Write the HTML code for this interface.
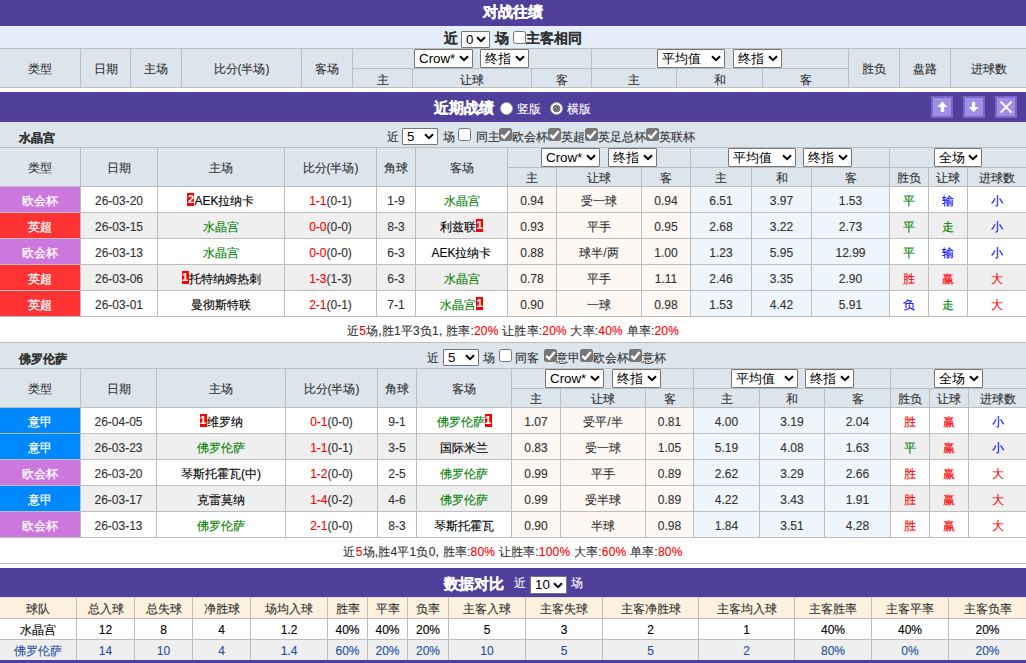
<!DOCTYPE html>
<html><head><meta charset="utf-8"><style>
html,body{margin:0;padding:0;width:1026px;height:663px;overflow:hidden;background:#fff}
body{position:relative;font-family:"Liberation Sans",sans-serif;font-size:12px;color:#333}
body>div,body>svg{position:absolute;box-sizing:content-box}
.t{text-align:center;white-space:nowrap;overflow:visible;-webkit-text-stroke:0.12px currentColor}
.lt{-webkit-text-stroke:0.12px currentColor}
.lt{white-space:nowrap}
.sel{background:#fff;border:1px solid #767676;border-radius:1px;color:#000;box-sizing:border-box!important}
.sel span{white-space:nowrap}
.bd{display:inline-block;background:#f00;color:#fff;font-weight:bold;font-size:11px;line-height:13px;height:13px;width:7px;text-align:center;vertical-align:top;margin-top:4px}
</style></head><body>
<div style="left:0px;top:0px;width:1026px;height:26px;background:#51409b;"></div>
<div class="t" style="left:0px;top:-1px;width:1026px;height:25px;line-height:25px;font-size:15px;color:#fff;font-weight:bold;-webkit-text-stroke:0.3px #fff">对战往绩</div>
<div style="left:0px;top:26px;width:1026px;height:22px;background:#e4eef8;"></div>
<div class="lt" style="left:444px;top:27px;height:23px;line-height:23px;font-size:14px;color:#333;font-weight:bold;">近</div>
<div class="sel" style="left:461px;top:31px;width:29px;height:17px;line-height:15px;font-size:13.33px"><span style="position:absolute;left:4px;top:0">0</span><svg width="10" height="7" viewBox="0 0 10 7" style="position:absolute;right:3px;top:4px"><path d="M1 1.2 L5 5.2 L9 1.2" fill="none" stroke="#000" stroke-width="2"/></svg></div>
<div class="lt" style="left:495px;top:27px;height:23px;line-height:23px;font-size:14px;color:#333;font-weight:bold;">场</div>
<div style="left:513px;top:31px;width:11px;height:11px;border:1px solid #767676;border-radius:2.5px;background:#fff"></div>
<div class="lt" style="left:526px;top:27px;height:23px;line-height:23px;font-size:14px;color:#333;font-weight:bold;">主客相同</div>
<div style="left:0px;top:48px;width:1026px;height:40px;background:#dce4ec;"></div>
<div style="left:0px;top:48px;width:1026px;height:1px;background:#bdbdbd;"></div>
<div style="left:352px;top:68px;width:496px;height:1px;background:#bdbdbd;"></div>
<div style="left:0px;top:87px;width:1026px;height:1px;background:#bdbdbd;"></div>
<div style="left:80px;top:48px;width:1px;height:40px;background:#bdbdbd;"></div>
<div style="left:130px;top:48px;width:1px;height:40px;background:#bdbdbd;"></div>
<div style="left:181px;top:48px;width:1px;height:40px;background:#bdbdbd;"></div>
<div style="left:301px;top:48px;width:1px;height:40px;background:#bdbdbd;"></div>
<div style="left:352px;top:48px;width:1px;height:40px;background:#bdbdbd;"></div>
<div style="left:591px;top:48px;width:1px;height:40px;background:#bdbdbd;"></div>
<div style="left:848px;top:48px;width:1px;height:40px;background:#bdbdbd;"></div>
<div style="left:899px;top:48px;width:1px;height:40px;background:#bdbdbd;"></div>
<div style="left:950px;top:48px;width:1px;height:40px;background:#bdbdbd;"></div>
<div style="left:412px;top:68px;width:1px;height:20px;background:#bdbdbd;"></div>
<div style="left:531px;top:68px;width:1px;height:20px;background:#bdbdbd;"></div>
<div style="left:676px;top:68px;width:1px;height:20px;background:#bdbdbd;"></div>
<div style="left:762px;top:68px;width:1px;height:20px;background:#bdbdbd;"></div>
<div class="t" style="left:-1px;top:50px;width:81px;height:38px;line-height:38px;font-size:12px;color:#333;font-weight:normal;">类型</div>
<div class="t" style="left:81px;top:50px;width:49px;height:38px;line-height:38px;font-size:12px;color:#333;font-weight:normal;">日期</div>
<div class="t" style="left:131px;top:50px;width:50px;height:38px;line-height:38px;font-size:12px;color:#333;font-weight:normal;">主场</div>
<div class="t" style="left:182px;top:50px;width:119px;height:38px;line-height:38px;font-size:12px;color:#333;font-weight:normal;">比分(半场)</div>
<div class="t" style="left:302px;top:50px;width:50px;height:38px;line-height:38px;font-size:12px;color:#333;font-weight:normal;">客场</div>
<div class="t" style="left:849px;top:50px;width:50px;height:38px;line-height:38px;font-size:12px;color:#333;font-weight:normal;">胜负</div>
<div class="t" style="left:900px;top:50px;width:50px;height:38px;line-height:38px;font-size:12px;color:#333;font-weight:normal;">盘路</div>
<div class="t" style="left:951px;top:50px;width:75px;height:38px;line-height:38px;font-size:12px;color:#333;font-weight:normal;">进球数</div>
<div class="t" style="left:353px;top:71px;width:59px;height:18px;line-height:18px;font-size:12px;color:#333;font-weight:normal;">主</div>
<div class="t" style="left:413px;top:71px;width:118px;height:18px;line-height:18px;font-size:12px;color:#333;font-weight:normal;">让球</div>
<div class="t" style="left:532px;top:71px;width:59px;height:18px;line-height:18px;font-size:12px;color:#333;font-weight:normal;">客</div>
<div class="t" style="left:592px;top:71px;width:84px;height:18px;line-height:18px;font-size:12px;color:#333;font-weight:normal;">主</div>
<div class="t" style="left:677px;top:71px;width:85px;height:18px;line-height:18px;font-size:12px;color:#333;font-weight:normal;">和</div>
<div class="t" style="left:763px;top:71px;width:85px;height:18px;line-height:18px;font-size:12px;color:#333;font-weight:normal;">客</div>
<div class="sel" style="left:414px;top:49px;width:59px;height:19px;line-height:17px;font-size:13.33px"><span style="position:absolute;left:4px;top:0">Crow*</span><svg width="10" height="7" viewBox="0 0 10 7" style="position:absolute;right:3px;top:5px"><path d="M1 1.2 L5 5.2 L9 1.2" fill="none" stroke="#000" stroke-width="2"/></svg></div>
<div class="sel" style="left:480px;top:49px;width:49px;height:19px;line-height:17px;font-size:13.33px"><span style="position:absolute;left:4px;top:0">终指</span><svg width="10" height="7" viewBox="0 0 10 7" style="position:absolute;right:3px;top:5px"><path d="M1 1.2 L5 5.2 L9 1.2" fill="none" stroke="#000" stroke-width="2"/></svg></div>
<div class="sel" style="left:657px;top:49px;width:68px;height:19px;line-height:17px;font-size:13.33px"><span style="position:absolute;left:4px;top:0">平均值</span><svg width="10" height="7" viewBox="0 0 10 7" style="position:absolute;right:3px;top:5px"><path d="M1 1.2 L5 5.2 L9 1.2" fill="none" stroke="#000" stroke-width="2"/></svg></div>
<div class="sel" style="left:733px;top:49px;width:49px;height:19px;line-height:17px;font-size:13.33px"><span style="position:absolute;left:4px;top:0">终指</span><svg width="10" height="7" viewBox="0 0 10 7" style="position:absolute;right:3px;top:5px"><path d="M1 1.2 L5 5.2 L9 1.2" fill="none" stroke="#000" stroke-width="2"/></svg></div>
<div style="left:0px;top:88px;width:1026px;height:4px;background:#fff;"></div>
<div style="left:0px;top:92px;width:1026px;height:30px;background:#51409b;"></div>
<div class="lt" style="left:434px;top:93px;height:30px;line-height:30px;font-size:15px;color:#fff;font-weight:bold;-webkit-text-stroke:0.3px #fff">近期战绩</div>
<div style="left:500px;top:102px;width:11px;height:11px;border-radius:50%;background:#fff;border:1px solid #aaa;box-sizing:content-box"></div>
<div class="lt" style="left:517px;top:94px;height:30px;line-height:30px;font-size:12px;color:#fff;font-weight:normal;">竖版</div>
<div style="left:550px;top:102px;width:11px;height:11px;border-radius:50%;background:radial-gradient(circle at 50% 50%, #777 0, #777 3.6px, #fff 4.2px);border:1px solid #aaa"></div>
<div class="lt" style="left:567px;top:94px;height:30px;line-height:30px;font-size:12px;color:#fff;font-weight:normal;">横版</div>
<div style="left:931px;top:96px;width:18px;height:18px;border:2px solid #7a68c8;background:#a08de6"></div>
<svg style="position:absolute;left:931px;top:96px" width="22" height="22" viewBox="0 0 22 22"><path d="M11.4 5.6 L16.4 11 L13.2 11 L13.2 16 L9.8 16 L9.8 11 L6.4 11 Z" fill="#fff"/></svg>
<div style="left:963px;top:96px;width:18px;height:18px;border:2px solid #7a68c8;background:#a08de6"></div>
<svg style="position:absolute;left:963px;top:96px" width="22" height="22" viewBox="0 0 22 22"><path d="M10.6 16.2 L15.7 11 L12.2 11 L12.2 6 L8.9 6 L8.9 11 L5.6 11 Z" fill="#fff"/></svg>
<div style="left:995px;top:96px;width:18px;height:18px;border:2px solid #7a68c8;background:#a08de6"></div>
<svg style="position:absolute;left:995px;top:96px" width="22" height="22" viewBox="0 0 22 22"><path d="M5.6 5.6 L16.6 16.6 M16.6 5.6 L5.6 16.6" stroke="#fff" stroke-width="2"/></svg>
<div style="left:0px;top:122px;width:1026px;height:25px;background:#dce4ec;"></div>
<div class="lt" style="left:19px;top:126px;height:25px;line-height:25px;font-size:12px;color:#333;font-weight:bold;">水晶宫</div>
<div class="lt" style="left:387px;top:125px;height:25px;line-height:25px;font-size:12px;color:#333;font-weight:normal;">近</div>
<div class="sel" style="left:402px;top:128px;width:36px;height:17px;line-height:15px;font-size:13.33px"><span style="position:absolute;left:4px;top:0">5</span><svg width="10" height="7" viewBox="0 0 10 7" style="position:absolute;right:3px;top:4px"><path d="M1 1.2 L5 5.2 L9 1.2" fill="none" stroke="#000" stroke-width="2"/></svg></div>
<div class="lt" style="left:443px;top:125px;height:25px;line-height:25px;font-size:12px;color:#333;font-weight:normal;">场</div>
<div style="left:458px;top:128px;width:11px;height:11px;border:1px solid #767676;border-radius:2.5px;background:#fff"></div>
<div class="lt" style="left:476px;top:125px;height:25px;line-height:25px;font-size:12px;color:#333;font-weight:normal;">同主</div>
<div style="left:499px;top:128px;width:13px;height:13px"><svg width="13" height="13" viewBox="0 0 13 13" style="position:absolute;left:0;top:0"><rect x="0" y="0" width="13" height="13" rx="2.5" fill="#767676"/><path d="M2.3 6.9 L5.1 9.8 L10.7 3.0" fill="none" stroke="#fff" stroke-width="2.4"/></svg></div>
<div class="lt" style="left:512px;top:125px;height:25px;line-height:25px;font-size:12px;color:#333;font-weight:normal;">欧会杯</div>
<div style="left:548px;top:128px;width:13px;height:13px"><svg width="13" height="13" viewBox="0 0 13 13" style="position:absolute;left:0;top:0"><rect x="0" y="0" width="13" height="13" rx="2.5" fill="#767676"/><path d="M2.3 6.9 L5.1 9.8 L10.7 3.0" fill="none" stroke="#fff" stroke-width="2.4"/></svg></div>
<div class="lt" style="left:561px;top:125px;height:25px;line-height:25px;font-size:12px;color:#333;font-weight:normal;">英超</div>
<div style="left:585px;top:128px;width:13px;height:13px"><svg width="13" height="13" viewBox="0 0 13 13" style="position:absolute;left:0;top:0"><rect x="0" y="0" width="13" height="13" rx="2.5" fill="#767676"/><path d="M2.3 6.9 L5.1 9.8 L10.7 3.0" fill="none" stroke="#fff" stroke-width="2.4"/></svg></div>
<div class="lt" style="left:598px;top:125px;height:25px;line-height:25px;font-size:12px;color:#333;font-weight:normal;">英足总杯</div>
<div style="left:646px;top:128px;width:13px;height:13px"><svg width="13" height="13" viewBox="0 0 13 13" style="position:absolute;left:0;top:0"><rect x="0" y="0" width="13" height="13" rx="2.5" fill="#767676"/><path d="M2.3 6.9 L5.1 9.8 L10.7 3.0" fill="none" stroke="#fff" stroke-width="2.4"/></svg></div>
<div class="lt" style="left:659px;top:125px;height:25px;line-height:25px;font-size:12px;color:#333;font-weight:normal;">英联杯</div>
<div style="left:0px;top:147px;width:1026px;height:40px;background:#dce4ec;"></div>
<div style="left:0px;top:147px;width:1026px;height:1px;background:#bdbdbd;"></div>
<div style="left:507px;top:167px;width:519px;height:1px;background:#bdbdbd;"></div>
<div style="left:0px;top:186px;width:1026px;height:1px;background:#bdbdbd;"></div>
<div style="left:80px;top:147px;width:1px;height:169px;background:#bdbdbd;"></div>
<div style="left:157px;top:147px;width:1px;height:169px;background:#bdbdbd;"></div>
<div style="left:284px;top:147px;width:1px;height:169px;background:#bdbdbd;"></div>
<div style="left:376px;top:147px;width:1px;height:169px;background:#bdbdbd;"></div>
<div style="left:415px;top:147px;width:1px;height:169px;background:#bdbdbd;"></div>
<div style="left:507px;top:147px;width:1px;height:169px;background:#bdbdbd;"></div>
<div style="left:690px;top:147px;width:1px;height:169px;background:#bdbdbd;"></div>
<div style="left:889px;top:147px;width:1px;height:169px;background:#bdbdbd;"></div>
<div style="left:556px;top:167px;width:1px;height:149px;background:#bdbdbd;"></div>
<div style="left:641px;top:167px;width:1px;height:149px;background:#bdbdbd;"></div>
<div style="left:751px;top:167px;width:1px;height:149px;background:#bdbdbd;"></div>
<div style="left:811px;top:167px;width:1px;height:149px;background:#bdbdbd;"></div>
<div style="left:928px;top:167px;width:1px;height:149px;background:#bdbdbd;"></div>
<div style="left:967px;top:167px;width:1px;height:149px;background:#bdbdbd;"></div>
<div class="t" style="left:-1px;top:149px;width:81px;height:38px;line-height:38px;font-size:12px;color:#333;font-weight:normal;">类型</div>
<div class="t" style="left:81px;top:149px;width:76px;height:38px;line-height:38px;font-size:12px;color:#333;font-weight:normal;">日期</div>
<div class="t" style="left:158px;top:149px;width:126px;height:38px;line-height:38px;font-size:12px;color:#333;font-weight:normal;">主场</div>
<div class="t" style="left:285px;top:149px;width:91px;height:38px;line-height:38px;font-size:12px;color:#333;font-weight:normal;">比分(半场)</div>
<div class="t" style="left:377px;top:149px;width:38px;height:38px;line-height:38px;font-size:12px;color:#333;font-weight:normal;">角球</div>
<div class="t" style="left:416px;top:149px;width:91px;height:38px;line-height:38px;font-size:12px;color:#333;font-weight:normal;">客场</div>
<div class="t" style="left:508px;top:169px;width:48px;height:18px;line-height:18px;font-size:12px;color:#333;font-weight:normal;">主</div>
<div class="t" style="left:557px;top:169px;width:84px;height:18px;line-height:18px;font-size:12px;color:#333;font-weight:normal;">让球</div>
<div class="t" style="left:642px;top:169px;width:48px;height:18px;line-height:18px;font-size:12px;color:#333;font-weight:normal;">客</div>
<div class="t" style="left:691px;top:169px;width:60px;height:18px;line-height:18px;font-size:12px;color:#333;font-weight:normal;">主</div>
<div class="t" style="left:752px;top:169px;width:59px;height:18px;line-height:18px;font-size:12px;color:#333;font-weight:normal;">和</div>
<div class="t" style="left:812px;top:169px;width:77px;height:18px;line-height:18px;font-size:12px;color:#333;font-weight:normal;">客</div>
<div class="t" style="left:890px;top:169px;width:38px;height:18px;line-height:18px;font-size:12px;color:#333;font-weight:normal;">胜负</div>
<div class="t" style="left:929px;top:169px;width:38px;height:18px;line-height:18px;font-size:12px;color:#333;font-weight:normal;">让球</div>
<div class="t" style="left:968px;top:169px;width:58px;height:18px;line-height:18px;font-size:12px;color:#333;font-weight:normal;">进球数</div>
<div class="sel" style="left:541px;top:148px;width:59px;height:19px;line-height:17px;font-size:13.33px"><span style="position:absolute;left:4px;top:0">Crow*</span><svg width="10" height="7" viewBox="0 0 10 7" style="position:absolute;right:3px;top:5px"><path d="M1 1.2 L5 5.2 L9 1.2" fill="none" stroke="#000" stroke-width="2"/></svg></div>
<div class="sel" style="left:608px;top:148px;width:49px;height:19px;line-height:17px;font-size:13.33px"><span style="position:absolute;left:4px;top:0">终指</span><svg width="10" height="7" viewBox="0 0 10 7" style="position:absolute;right:3px;top:5px"><path d="M1 1.2 L5 5.2 L9 1.2" fill="none" stroke="#000" stroke-width="2"/></svg></div>
<div class="sel" style="left:728px;top:148px;width:68px;height:19px;line-height:17px;font-size:13.33px"><span style="position:absolute;left:4px;top:0">平均值</span><svg width="10" height="7" viewBox="0 0 10 7" style="position:absolute;right:3px;top:5px"><path d="M1 1.2 L5 5.2 L9 1.2" fill="none" stroke="#000" stroke-width="2"/></svg></div>
<div class="sel" style="left:803px;top:148px;width:49px;height:19px;line-height:17px;font-size:13.33px"><span style="position:absolute;left:4px;top:0">终指</span><svg width="10" height="7" viewBox="0 0 10 7" style="position:absolute;right:3px;top:5px"><path d="M1 1.2 L5 5.2 L9 1.2" fill="none" stroke="#000" stroke-width="2"/></svg></div>
<div class="sel" style="left:934px;top:148px;width:48px;height:19px;line-height:17px;font-size:13.33px"><span style="position:absolute;left:4px;top:0">全场</span><svg width="10" height="7" viewBox="0 0 10 7" style="position:absolute;right:3px;top:5px"><path d="M1 1.2 L5 5.2 L9 1.2" fill="none" stroke="#000" stroke-width="2"/></svg></div>
<div style="left:0px;top:187px;width:80px;height:25px;background:#cc77dd;"></div>
<div style="left:81px;top:187px;width:426px;height:25px;background:#fff;"></div>
<div style="left:508px;top:187px;width:182px;height:25px;background:#fdf8f4;"></div>
<div style="left:691px;top:187px;width:198px;height:25px;background:#eef5fb;"></div>
<div style="left:890px;top:187px;width:136px;height:25px;background:#fff;"></div>
<div style="left:0px;top:212px;width:1026px;height:1px;background:#bdbdbd;"></div>
<div class="t" style="left:-1px;top:189px;width:81px;height:25px;line-height:25px;font-size:12px;color:#fff;font-weight:normal;-webkit-text-stroke:0.3px #fff">欧会杯</div>
<div class="t" style="left:81px;top:189px;width:76px;height:25px;line-height:25px;font-size:12px;color:#333;font-weight:normal;">26-03-20</div>
<div class="t" style="left:158px;top:189px;width:126px;height:25px;line-height:25px;font-size:12px;color:#000;font-weight:normal;"><span class="bd">2</span>AEK拉纳卡</div>
<div class="t" style="left:285px;top:189px;width:91px;height:25px;line-height:25px;font-size:12px;color:#333;font-weight:normal;"><span style="color:#ff0000">1-1</span>(0-1)</div>
<div class="t" style="left:377px;top:189px;width:38px;height:25px;line-height:25px;font-size:12px;color:#333;font-weight:normal;">1-9</div>
<div class="t" style="left:416px;top:189px;width:91px;height:25px;line-height:25px;font-size:12px;color:#008000;font-weight:normal;">水晶宫</div>
<div class="t" style="left:508px;top:189px;width:48px;height:25px;line-height:25px;font-size:12px;color:#333;font-weight:normal;">0.94</div>
<div class="t" style="left:557px;top:189px;width:84px;height:25px;line-height:25px;font-size:12px;color:#333;font-weight:normal;">受一球</div>
<div class="t" style="left:642px;top:189px;width:48px;height:25px;line-height:25px;font-size:12px;color:#333;font-weight:normal;">0.94</div>
<div class="t" style="left:691px;top:189px;width:60px;height:25px;line-height:25px;font-size:12px;color:#333;font-weight:normal;">6.51</div>
<div class="t" style="left:752px;top:189px;width:59px;height:25px;line-height:25px;font-size:12px;color:#333;font-weight:normal;">3.97</div>
<div class="t" style="left:812px;top:189px;width:77px;height:25px;line-height:25px;font-size:12px;color:#333;font-weight:normal;">1.53</div>
<div class="t" style="left:890px;top:189px;width:38px;height:25px;line-height:25px;font-size:12px;color:#008000;font-weight:normal;">平</div>
<div class="t" style="left:929px;top:189px;width:38px;height:25px;line-height:25px;font-size:12px;color:#0000ff;font-weight:normal;">输</div>
<div class="t" style="left:968px;top:189px;width:58px;height:25px;line-height:25px;font-size:12px;color:#0000ff;font-weight:normal;">小</div>
<div style="left:0px;top:213px;width:80px;height:25px;background:#ff3333;"></div>
<div style="left:81px;top:213px;width:426px;height:25px;background:#efefef;"></div>
<div style="left:508px;top:213px;width:182px;height:25px;background:#fdf8f4;"></div>
<div style="left:691px;top:213px;width:198px;height:25px;background:#eef5fb;"></div>
<div style="left:890px;top:213px;width:136px;height:25px;background:#efefef;"></div>
<div style="left:0px;top:238px;width:1026px;height:1px;background:#bdbdbd;"></div>
<div class="t" style="left:-1px;top:215px;width:81px;height:25px;line-height:25px;font-size:12px;color:#fff;font-weight:normal;-webkit-text-stroke:0.3px #fff">英超</div>
<div class="t" style="left:81px;top:215px;width:76px;height:25px;line-height:25px;font-size:12px;color:#333;font-weight:normal;">26-03-15</div>
<div class="t" style="left:158px;top:215px;width:126px;height:25px;line-height:25px;font-size:12px;color:#008000;font-weight:normal;">水晶宫</div>
<div class="t" style="left:285px;top:215px;width:91px;height:25px;line-height:25px;font-size:12px;color:#333;font-weight:normal;"><span style="color:#ff0000">0-0</span>(0-0)</div>
<div class="t" style="left:377px;top:215px;width:38px;height:25px;line-height:25px;font-size:12px;color:#333;font-weight:normal;">8-3</div>
<div class="t" style="left:416px;top:215px;width:91px;height:25px;line-height:25px;font-size:12px;color:#000;font-weight:normal;">利兹联<span class="bd">1</span></div>
<div class="t" style="left:508px;top:215px;width:48px;height:25px;line-height:25px;font-size:12px;color:#333;font-weight:normal;">0.93</div>
<div class="t" style="left:557px;top:215px;width:84px;height:25px;line-height:25px;font-size:12px;color:#333;font-weight:normal;">平手</div>
<div class="t" style="left:642px;top:215px;width:48px;height:25px;line-height:25px;font-size:12px;color:#333;font-weight:normal;">0.95</div>
<div class="t" style="left:691px;top:215px;width:60px;height:25px;line-height:25px;font-size:12px;color:#333;font-weight:normal;">2.68</div>
<div class="t" style="left:752px;top:215px;width:59px;height:25px;line-height:25px;font-size:12px;color:#333;font-weight:normal;">3.22</div>
<div class="t" style="left:812px;top:215px;width:77px;height:25px;line-height:25px;font-size:12px;color:#333;font-weight:normal;">2.73</div>
<div class="t" style="left:890px;top:215px;width:38px;height:25px;line-height:25px;font-size:12px;color:#008000;font-weight:normal;">平</div>
<div class="t" style="left:929px;top:215px;width:38px;height:25px;line-height:25px;font-size:12px;color:#008000;font-weight:normal;">走</div>
<div class="t" style="left:968px;top:215px;width:58px;height:25px;line-height:25px;font-size:12px;color:#0000ff;font-weight:normal;">小</div>
<div style="left:0px;top:239px;width:80px;height:25px;background:#cc77dd;"></div>
<div style="left:81px;top:239px;width:426px;height:25px;background:#fff;"></div>
<div style="left:508px;top:239px;width:182px;height:25px;background:#fdf8f4;"></div>
<div style="left:691px;top:239px;width:198px;height:25px;background:#eef5fb;"></div>
<div style="left:890px;top:239px;width:136px;height:25px;background:#fff;"></div>
<div style="left:0px;top:264px;width:1026px;height:1px;background:#bdbdbd;"></div>
<div class="t" style="left:-1px;top:241px;width:81px;height:25px;line-height:25px;font-size:12px;color:#fff;font-weight:normal;-webkit-text-stroke:0.3px #fff">欧会杯</div>
<div class="t" style="left:81px;top:241px;width:76px;height:25px;line-height:25px;font-size:12px;color:#333;font-weight:normal;">26-03-13</div>
<div class="t" style="left:158px;top:241px;width:126px;height:25px;line-height:25px;font-size:12px;color:#008000;font-weight:normal;">水晶宫</div>
<div class="t" style="left:285px;top:241px;width:91px;height:25px;line-height:25px;font-size:12px;color:#333;font-weight:normal;"><span style="color:#ff0000">0-0</span>(0-0)</div>
<div class="t" style="left:377px;top:241px;width:38px;height:25px;line-height:25px;font-size:12px;color:#333;font-weight:normal;">6-3</div>
<div class="t" style="left:416px;top:241px;width:91px;height:25px;line-height:25px;font-size:12px;color:#000;font-weight:normal;">AEK拉纳卡</div>
<div class="t" style="left:508px;top:241px;width:48px;height:25px;line-height:25px;font-size:12px;color:#333;font-weight:normal;">0.88</div>
<div class="t" style="left:557px;top:241px;width:84px;height:25px;line-height:25px;font-size:12px;color:#333;font-weight:normal;">球半/两</div>
<div class="t" style="left:642px;top:241px;width:48px;height:25px;line-height:25px;font-size:12px;color:#333;font-weight:normal;">1.00</div>
<div class="t" style="left:691px;top:241px;width:60px;height:25px;line-height:25px;font-size:12px;color:#333;font-weight:normal;">1.23</div>
<div class="t" style="left:752px;top:241px;width:59px;height:25px;line-height:25px;font-size:12px;color:#333;font-weight:normal;">5.95</div>
<div class="t" style="left:812px;top:241px;width:77px;height:25px;line-height:25px;font-size:12px;color:#333;font-weight:normal;">12.99</div>
<div class="t" style="left:890px;top:241px;width:38px;height:25px;line-height:25px;font-size:12px;color:#008000;font-weight:normal;">平</div>
<div class="t" style="left:929px;top:241px;width:38px;height:25px;line-height:25px;font-size:12px;color:#0000ff;font-weight:normal;">输</div>
<div class="t" style="left:968px;top:241px;width:58px;height:25px;line-height:25px;font-size:12px;color:#0000ff;font-weight:normal;">小</div>
<div style="left:0px;top:265px;width:80px;height:25px;background:#ff3333;"></div>
<div style="left:81px;top:265px;width:426px;height:25px;background:#efefef;"></div>
<div style="left:508px;top:265px;width:182px;height:25px;background:#fdf8f4;"></div>
<div style="left:691px;top:265px;width:198px;height:25px;background:#eef5fb;"></div>
<div style="left:890px;top:265px;width:136px;height:25px;background:#efefef;"></div>
<div style="left:0px;top:290px;width:1026px;height:1px;background:#bdbdbd;"></div>
<div class="t" style="left:-1px;top:267px;width:81px;height:25px;line-height:25px;font-size:12px;color:#fff;font-weight:normal;-webkit-text-stroke:0.3px #fff">英超</div>
<div class="t" style="left:81px;top:267px;width:76px;height:25px;line-height:25px;font-size:12px;color:#333;font-weight:normal;">26-03-06</div>
<div class="t" style="left:158px;top:267px;width:126px;height:25px;line-height:25px;font-size:12px;color:#000;font-weight:normal;"><span class="bd">1</span>托特纳姆热刺</div>
<div class="t" style="left:285px;top:267px;width:91px;height:25px;line-height:25px;font-size:12px;color:#333;font-weight:normal;"><span style="color:#ff0000">1-3</span>(1-3)</div>
<div class="t" style="left:377px;top:267px;width:38px;height:25px;line-height:25px;font-size:12px;color:#333;font-weight:normal;">6-3</div>
<div class="t" style="left:416px;top:267px;width:91px;height:25px;line-height:25px;font-size:12px;color:#008000;font-weight:normal;">水晶宫</div>
<div class="t" style="left:508px;top:267px;width:48px;height:25px;line-height:25px;font-size:12px;color:#333;font-weight:normal;">0.78</div>
<div class="t" style="left:557px;top:267px;width:84px;height:25px;line-height:25px;font-size:12px;color:#333;font-weight:normal;">平手</div>
<div class="t" style="left:642px;top:267px;width:48px;height:25px;line-height:25px;font-size:12px;color:#333;font-weight:normal;">1.11</div>
<div class="t" style="left:691px;top:267px;width:60px;height:25px;line-height:25px;font-size:12px;color:#333;font-weight:normal;">2.46</div>
<div class="t" style="left:752px;top:267px;width:59px;height:25px;line-height:25px;font-size:12px;color:#333;font-weight:normal;">3.35</div>
<div class="t" style="left:812px;top:267px;width:77px;height:25px;line-height:25px;font-size:12px;color:#333;font-weight:normal;">2.90</div>
<div class="t" style="left:890px;top:267px;width:38px;height:25px;line-height:25px;font-size:12px;color:#ff0000;font-weight:normal;">胜</div>
<div class="t" style="left:929px;top:267px;width:38px;height:25px;line-height:25px;font-size:12px;color:#ff0000;font-weight:normal;">赢</div>
<div class="t" style="left:968px;top:267px;width:58px;height:25px;line-height:25px;font-size:12px;color:#ff0000;font-weight:normal;">大</div>
<div style="left:0px;top:291px;width:80px;height:25px;background:#ff3333;"></div>
<div style="left:81px;top:291px;width:426px;height:25px;background:#fff;"></div>
<div style="left:508px;top:291px;width:182px;height:25px;background:#fdf8f4;"></div>
<div style="left:691px;top:291px;width:198px;height:25px;background:#eef5fb;"></div>
<div style="left:890px;top:291px;width:136px;height:25px;background:#fff;"></div>
<div style="left:0px;top:316px;width:1026px;height:1px;background:#bdbdbd;"></div>
<div class="t" style="left:-1px;top:293px;width:81px;height:25px;line-height:25px;font-size:12px;color:#fff;font-weight:normal;-webkit-text-stroke:0.3px #fff">英超</div>
<div class="t" style="left:81px;top:293px;width:76px;height:25px;line-height:25px;font-size:12px;color:#333;font-weight:normal;">26-03-01</div>
<div class="t" style="left:158px;top:293px;width:126px;height:25px;line-height:25px;font-size:12px;color:#000;font-weight:normal;">曼彻斯特联</div>
<div class="t" style="left:285px;top:293px;width:91px;height:25px;line-height:25px;font-size:12px;color:#333;font-weight:normal;"><span style="color:#ff0000">2-1</span>(0-1)</div>
<div class="t" style="left:377px;top:293px;width:38px;height:25px;line-height:25px;font-size:12px;color:#333;font-weight:normal;">7-1</div>
<div class="t" style="left:416px;top:293px;width:91px;height:25px;line-height:25px;font-size:12px;color:#008000;font-weight:normal;">水晶宫<span class="bd">1</span></div>
<div class="t" style="left:508px;top:293px;width:48px;height:25px;line-height:25px;font-size:12px;color:#333;font-weight:normal;">0.90</div>
<div class="t" style="left:557px;top:293px;width:84px;height:25px;line-height:25px;font-size:12px;color:#333;font-weight:normal;">一球</div>
<div class="t" style="left:642px;top:293px;width:48px;height:25px;line-height:25px;font-size:12px;color:#333;font-weight:normal;">0.98</div>
<div class="t" style="left:691px;top:293px;width:60px;height:25px;line-height:25px;font-size:12px;color:#333;font-weight:normal;">1.53</div>
<div class="t" style="left:752px;top:293px;width:59px;height:25px;line-height:25px;font-size:12px;color:#333;font-weight:normal;">4.42</div>
<div class="t" style="left:812px;top:293px;width:77px;height:25px;line-height:25px;font-size:12px;color:#333;font-weight:normal;">5.91</div>
<div class="t" style="left:890px;top:293px;width:38px;height:25px;line-height:25px;font-size:12px;color:#0000ff;font-weight:normal;">负</div>
<div class="t" style="left:929px;top:293px;width:38px;height:25px;line-height:25px;font-size:12px;color:#008000;font-weight:normal;">走</div>
<div class="t" style="left:968px;top:293px;width:58px;height:25px;line-height:25px;font-size:12px;color:#ff0000;font-weight:normal;">大</div>
<div style="left:80px;top:186px;width:1px;height:130px;background:#bdbdbd;"></div>
<div style="left:157px;top:186px;width:1px;height:130px;background:#bdbdbd;"></div>
<div style="left:284px;top:186px;width:1px;height:130px;background:#bdbdbd;"></div>
<div style="left:376px;top:186px;width:1px;height:130px;background:#bdbdbd;"></div>
<div style="left:415px;top:186px;width:1px;height:130px;background:#bdbdbd;"></div>
<div style="left:507px;top:186px;width:1px;height:130px;background:#bdbdbd;"></div>
<div style="left:690px;top:186px;width:1px;height:130px;background:#bdbdbd;"></div>
<div style="left:889px;top:186px;width:1px;height:130px;background:#bdbdbd;"></div>
<div style="left:556px;top:186px;width:1px;height:130px;background:#bdbdbd;"></div>
<div style="left:641px;top:186px;width:1px;height:130px;background:#bdbdbd;"></div>
<div style="left:751px;top:186px;width:1px;height:130px;background:#bdbdbd;"></div>
<div style="left:811px;top:186px;width:1px;height:130px;background:#bdbdbd;"></div>
<div style="left:928px;top:186px;width:1px;height:130px;background:#bdbdbd;"></div>
<div style="left:967px;top:186px;width:1px;height:130px;background:#bdbdbd;"></div>
<div style="left:0px;top:317px;width:1026px;height:25px;background:#fff;"></div>
<div class="t" style="left:0px;top:319px;width:1026px;height:25px;line-height:25px;font-size:12px;color:#333;font-weight:normal;letter-spacing:0.2px">近<span style="color:#ff0000">5</span>场,胜1平3负1, 胜率:<span style="color:#ff0000">20%</span> 让胜率:<span style="color:#ff0000">20%</span> 大率:<span style="color:#ff0000">40%</span> 单率:<span style="color:#ff0000">20%</span></div>
<div style="left:0px;top:342px;width:1026px;height:1px;background:#bdbdbd;"></div>
<div style="left:0px;top:343px;width:1026px;height:25px;background:#dce4ec;"></div>
<div class="lt" style="left:19px;top:347px;height:25px;line-height:25px;font-size:12px;color:#333;font-weight:bold;">佛罗伦萨</div>
<div class="lt" style="left:427px;top:346px;height:25px;line-height:25px;font-size:12px;color:#333;font-weight:normal;">近</div>
<div class="sel" style="left:443px;top:349px;width:36px;height:17px;line-height:15px;font-size:13.33px"><span style="position:absolute;left:4px;top:0">5</span><svg width="10" height="7" viewBox="0 0 10 7" style="position:absolute;right:3px;top:4px"><path d="M1 1.2 L5 5.2 L9 1.2" fill="none" stroke="#000" stroke-width="2"/></svg></div>
<div class="lt" style="left:483px;top:346px;height:25px;line-height:25px;font-size:12px;color:#333;font-weight:normal;">场</div>
<div style="left:499px;top:349px;width:11px;height:11px;border:1px solid #767676;border-radius:2.5px;background:#fff"></div>
<div class="lt" style="left:515px;top:346px;height:25px;line-height:25px;font-size:12px;color:#333;font-weight:normal;">同客</div>
<div style="left:544px;top:349px;width:13px;height:13px"><svg width="13" height="13" viewBox="0 0 13 13" style="position:absolute;left:0;top:0"><rect x="0" y="0" width="13" height="13" rx="2.5" fill="#767676"/><path d="M2.3 6.9 L5.1 9.8 L10.7 3.0" fill="none" stroke="#fff" stroke-width="2.4"/></svg></div>
<div class="lt" style="left:556px;top:346px;height:25px;line-height:25px;font-size:12px;color:#333;font-weight:normal;">意甲</div>
<div style="left:580px;top:349px;width:13px;height:13px"><svg width="13" height="13" viewBox="0 0 13 13" style="position:absolute;left:0;top:0"><rect x="0" y="0" width="13" height="13" rx="2.5" fill="#767676"/><path d="M2.3 6.9 L5.1 9.8 L10.7 3.0" fill="none" stroke="#fff" stroke-width="2.4"/></svg></div>
<div class="lt" style="left:593px;top:346px;height:25px;line-height:25px;font-size:12px;color:#333;font-weight:normal;">欧会杯</div>
<div style="left:629px;top:349px;width:13px;height:13px"><svg width="13" height="13" viewBox="0 0 13 13" style="position:absolute;left:0;top:0"><rect x="0" y="0" width="13" height="13" rx="2.5" fill="#767676"/><path d="M2.3 6.9 L5.1 9.8 L10.7 3.0" fill="none" stroke="#fff" stroke-width="2.4"/></svg></div>
<div class="lt" style="left:642px;top:346px;height:25px;line-height:25px;font-size:12px;color:#333;font-weight:normal;">意杯</div>
<div style="left:0px;top:368px;width:1026px;height:40px;background:#dce4ec;"></div>
<div style="left:0px;top:368px;width:1026px;height:1px;background:#bdbdbd;"></div>
<div style="left:511px;top:388px;width:515px;height:1px;background:#bdbdbd;"></div>
<div style="left:0px;top:407px;width:1026px;height:1px;background:#bdbdbd;"></div>
<div style="left:80px;top:368px;width:1px;height:169px;background:#bdbdbd;"></div>
<div style="left:156px;top:368px;width:1px;height:169px;background:#bdbdbd;"></div>
<div style="left:285px;top:368px;width:1px;height:169px;background:#bdbdbd;"></div>
<div style="left:377px;top:368px;width:1px;height:169px;background:#bdbdbd;"></div>
<div style="left:416px;top:368px;width:1px;height:169px;background:#bdbdbd;"></div>
<div style="left:511px;top:368px;width:1px;height:169px;background:#bdbdbd;"></div>
<div style="left:693px;top:368px;width:1px;height:169px;background:#bdbdbd;"></div>
<div style="left:890px;top:368px;width:1px;height:169px;background:#bdbdbd;"></div>
<div style="left:560px;top:388px;width:1px;height:149px;background:#bdbdbd;"></div>
<div style="left:645px;top:388px;width:1px;height:149px;background:#bdbdbd;"></div>
<div style="left:759px;top:388px;width:1px;height:149px;background:#bdbdbd;"></div>
<div style="left:824px;top:388px;width:1px;height:149px;background:#bdbdbd;"></div>
<div style="left:929px;top:388px;width:1px;height:149px;background:#bdbdbd;"></div>
<div style="left:968px;top:388px;width:1px;height:149px;background:#bdbdbd;"></div>
<div class="t" style="left:-1px;top:370px;width:81px;height:38px;line-height:38px;font-size:12px;color:#333;font-weight:normal;">类型</div>
<div class="t" style="left:81px;top:370px;width:75px;height:38px;line-height:38px;font-size:12px;color:#333;font-weight:normal;">日期</div>
<div class="t" style="left:157px;top:370px;width:128px;height:38px;line-height:38px;font-size:12px;color:#333;font-weight:normal;">主场</div>
<div class="t" style="left:286px;top:370px;width:91px;height:38px;line-height:38px;font-size:12px;color:#333;font-weight:normal;">比分(半场)</div>
<div class="t" style="left:378px;top:370px;width:38px;height:38px;line-height:38px;font-size:12px;color:#333;font-weight:normal;">角球</div>
<div class="t" style="left:417px;top:370px;width:94px;height:38px;line-height:38px;font-size:12px;color:#333;font-weight:normal;">客场</div>
<div class="t" style="left:512px;top:390px;width:48px;height:18px;line-height:18px;font-size:12px;color:#333;font-weight:normal;">主</div>
<div class="t" style="left:561px;top:390px;width:84px;height:18px;line-height:18px;font-size:12px;color:#333;font-weight:normal;">让球</div>
<div class="t" style="left:646px;top:390px;width:47px;height:18px;line-height:18px;font-size:12px;color:#333;font-weight:normal;">客</div>
<div class="t" style="left:694px;top:390px;width:65px;height:18px;line-height:18px;font-size:12px;color:#333;font-weight:normal;">主</div>
<div class="t" style="left:760px;top:390px;width:64px;height:18px;line-height:18px;font-size:12px;color:#333;font-weight:normal;">和</div>
<div class="t" style="left:825px;top:390px;width:65px;height:18px;line-height:18px;font-size:12px;color:#333;font-weight:normal;">客</div>
<div class="t" style="left:891px;top:390px;width:38px;height:18px;line-height:18px;font-size:12px;color:#333;font-weight:normal;">胜负</div>
<div class="t" style="left:930px;top:390px;width:38px;height:18px;line-height:18px;font-size:12px;color:#333;font-weight:normal;">让球</div>
<div class="t" style="left:969px;top:390px;width:57px;height:18px;line-height:18px;font-size:12px;color:#333;font-weight:normal;">进球数</div>
<div class="sel" style="left:545px;top:369px;width:59px;height:19px;line-height:17px;font-size:13.33px"><span style="position:absolute;left:4px;top:0">Crow*</span><svg width="10" height="7" viewBox="0 0 10 7" style="position:absolute;right:3px;top:5px"><path d="M1 1.2 L5 5.2 L9 1.2" fill="none" stroke="#000" stroke-width="2"/></svg></div>
<div class="sel" style="left:612px;top:369px;width:49px;height:19px;line-height:17px;font-size:13.33px"><span style="position:absolute;left:4px;top:0">终指</span><svg width="10" height="7" viewBox="0 0 10 7" style="position:absolute;right:3px;top:5px"><path d="M1 1.2 L5 5.2 L9 1.2" fill="none" stroke="#000" stroke-width="2"/></svg></div>
<div class="sel" style="left:731px;top:369px;width:67px;height:19px;line-height:17px;font-size:13.33px"><span style="position:absolute;left:4px;top:0">平均值</span><svg width="10" height="7" viewBox="0 0 10 7" style="position:absolute;right:3px;top:5px"><path d="M1 1.2 L5 5.2 L9 1.2" fill="none" stroke="#000" stroke-width="2"/></svg></div>
<div class="sel" style="left:805px;top:369px;width:49px;height:19px;line-height:17px;font-size:13.33px"><span style="position:absolute;left:4px;top:0">终指</span><svg width="10" height="7" viewBox="0 0 10 7" style="position:absolute;right:3px;top:5px"><path d="M1 1.2 L5 5.2 L9 1.2" fill="none" stroke="#000" stroke-width="2"/></svg></div>
<div class="sel" style="left:934px;top:369px;width:49px;height:19px;line-height:17px;font-size:13.33px"><span style="position:absolute;left:4px;top:0">全场</span><svg width="10" height="7" viewBox="0 0 10 7" style="position:absolute;right:3px;top:5px"><path d="M1 1.2 L5 5.2 L9 1.2" fill="none" stroke="#000" stroke-width="2"/></svg></div>
<div style="left:0px;top:408px;width:80px;height:25px;background:#0088ff;"></div>
<div style="left:81px;top:408px;width:430px;height:25px;background:#fff;"></div>
<div style="left:512px;top:408px;width:181px;height:25px;background:#fdf8f4;"></div>
<div style="left:694px;top:408px;width:196px;height:25px;background:#eef5fb;"></div>
<div style="left:891px;top:408px;width:135px;height:25px;background:#fff;"></div>
<div style="left:0px;top:433px;width:1026px;height:1px;background:#bdbdbd;"></div>
<div class="t" style="left:-1px;top:410px;width:81px;height:25px;line-height:25px;font-size:12px;color:#fff;font-weight:normal;-webkit-text-stroke:0.3px #fff">意甲</div>
<div class="t" style="left:81px;top:410px;width:75px;height:25px;line-height:25px;font-size:12px;color:#333;font-weight:normal;">26-04-05</div>
<div class="t" style="left:157px;top:410px;width:128px;height:25px;line-height:25px;font-size:12px;color:#000;font-weight:normal;"><span class="bd">1</span>维罗纳</div>
<div class="t" style="left:286px;top:410px;width:91px;height:25px;line-height:25px;font-size:12px;color:#333;font-weight:normal;"><span style="color:#ff0000">0-1</span>(0-0)</div>
<div class="t" style="left:378px;top:410px;width:38px;height:25px;line-height:25px;font-size:12px;color:#333;font-weight:normal;">9-1</div>
<div class="t" style="left:417px;top:410px;width:94px;height:25px;line-height:25px;font-size:12px;color:#008000;font-weight:normal;">佛罗伦萨<span class="bd">1</span></div>
<div class="t" style="left:512px;top:410px;width:48px;height:25px;line-height:25px;font-size:12px;color:#333;font-weight:normal;">1.07</div>
<div class="t" style="left:561px;top:410px;width:84px;height:25px;line-height:25px;font-size:12px;color:#333;font-weight:normal;">受平/半</div>
<div class="t" style="left:646px;top:410px;width:47px;height:25px;line-height:25px;font-size:12px;color:#333;font-weight:normal;">0.81</div>
<div class="t" style="left:694px;top:410px;width:65px;height:25px;line-height:25px;font-size:12px;color:#333;font-weight:normal;">4.00</div>
<div class="t" style="left:760px;top:410px;width:64px;height:25px;line-height:25px;font-size:12px;color:#333;font-weight:normal;">3.19</div>
<div class="t" style="left:825px;top:410px;width:65px;height:25px;line-height:25px;font-size:12px;color:#333;font-weight:normal;">2.04</div>
<div class="t" style="left:891px;top:410px;width:38px;height:25px;line-height:25px;font-size:12px;color:#ff0000;font-weight:normal;">胜</div>
<div class="t" style="left:930px;top:410px;width:38px;height:25px;line-height:25px;font-size:12px;color:#ff0000;font-weight:normal;">赢</div>
<div class="t" style="left:969px;top:410px;width:57px;height:25px;line-height:25px;font-size:12px;color:#0000ff;font-weight:normal;">小</div>
<div style="left:0px;top:434px;width:80px;height:25px;background:#0088ff;"></div>
<div style="left:81px;top:434px;width:430px;height:25px;background:#efefef;"></div>
<div style="left:512px;top:434px;width:181px;height:25px;background:#fdf8f4;"></div>
<div style="left:694px;top:434px;width:196px;height:25px;background:#eef5fb;"></div>
<div style="left:891px;top:434px;width:135px;height:25px;background:#efefef;"></div>
<div style="left:0px;top:459px;width:1026px;height:1px;background:#bdbdbd;"></div>
<div class="t" style="left:-1px;top:436px;width:81px;height:25px;line-height:25px;font-size:12px;color:#fff;font-weight:normal;-webkit-text-stroke:0.3px #fff">意甲</div>
<div class="t" style="left:81px;top:436px;width:75px;height:25px;line-height:25px;font-size:12px;color:#333;font-weight:normal;">26-03-23</div>
<div class="t" style="left:157px;top:436px;width:128px;height:25px;line-height:25px;font-size:12px;color:#008000;font-weight:normal;">佛罗伦萨</div>
<div class="t" style="left:286px;top:436px;width:91px;height:25px;line-height:25px;font-size:12px;color:#333;font-weight:normal;"><span style="color:#ff0000">1-1</span>(0-1)</div>
<div class="t" style="left:378px;top:436px;width:38px;height:25px;line-height:25px;font-size:12px;color:#333;font-weight:normal;">3-5</div>
<div class="t" style="left:417px;top:436px;width:94px;height:25px;line-height:25px;font-size:12px;color:#000;font-weight:normal;">国际米兰</div>
<div class="t" style="left:512px;top:436px;width:48px;height:25px;line-height:25px;font-size:12px;color:#333;font-weight:normal;">0.83</div>
<div class="t" style="left:561px;top:436px;width:84px;height:25px;line-height:25px;font-size:12px;color:#333;font-weight:normal;">受一球</div>
<div class="t" style="left:646px;top:436px;width:47px;height:25px;line-height:25px;font-size:12px;color:#333;font-weight:normal;">1.05</div>
<div class="t" style="left:694px;top:436px;width:65px;height:25px;line-height:25px;font-size:12px;color:#333;font-weight:normal;">5.19</div>
<div class="t" style="left:760px;top:436px;width:64px;height:25px;line-height:25px;font-size:12px;color:#333;font-weight:normal;">4.08</div>
<div class="t" style="left:825px;top:436px;width:65px;height:25px;line-height:25px;font-size:12px;color:#333;font-weight:normal;">1.63</div>
<div class="t" style="left:891px;top:436px;width:38px;height:25px;line-height:25px;font-size:12px;color:#008000;font-weight:normal;">平</div>
<div class="t" style="left:930px;top:436px;width:38px;height:25px;line-height:25px;font-size:12px;color:#ff0000;font-weight:normal;">赢</div>
<div class="t" style="left:969px;top:436px;width:57px;height:25px;line-height:25px;font-size:12px;color:#0000ff;font-weight:normal;">小</div>
<div style="left:0px;top:460px;width:80px;height:25px;background:#cc77dd;"></div>
<div style="left:81px;top:460px;width:430px;height:25px;background:#fff;"></div>
<div style="left:512px;top:460px;width:181px;height:25px;background:#fdf8f4;"></div>
<div style="left:694px;top:460px;width:196px;height:25px;background:#eef5fb;"></div>
<div style="left:891px;top:460px;width:135px;height:25px;background:#fff;"></div>
<div style="left:0px;top:485px;width:1026px;height:1px;background:#bdbdbd;"></div>
<div class="t" style="left:-1px;top:462px;width:81px;height:25px;line-height:25px;font-size:12px;color:#fff;font-weight:normal;-webkit-text-stroke:0.3px #fff">欧会杯</div>
<div class="t" style="left:81px;top:462px;width:75px;height:25px;line-height:25px;font-size:12px;color:#333;font-weight:normal;">26-03-20</div>
<div class="t" style="left:157px;top:462px;width:128px;height:25px;line-height:25px;font-size:12px;color:#000;font-weight:normal;">琴斯托霍瓦(中)</div>
<div class="t" style="left:286px;top:462px;width:91px;height:25px;line-height:25px;font-size:12px;color:#333;font-weight:normal;"><span style="color:#ff0000">1-2</span>(0-0)</div>
<div class="t" style="left:378px;top:462px;width:38px;height:25px;line-height:25px;font-size:12px;color:#333;font-weight:normal;">2-5</div>
<div class="t" style="left:417px;top:462px;width:94px;height:25px;line-height:25px;font-size:12px;color:#008000;font-weight:normal;">佛罗伦萨</div>
<div class="t" style="left:512px;top:462px;width:48px;height:25px;line-height:25px;font-size:12px;color:#333;font-weight:normal;">0.99</div>
<div class="t" style="left:561px;top:462px;width:84px;height:25px;line-height:25px;font-size:12px;color:#333;font-weight:normal;">平手</div>
<div class="t" style="left:646px;top:462px;width:47px;height:25px;line-height:25px;font-size:12px;color:#333;font-weight:normal;">0.89</div>
<div class="t" style="left:694px;top:462px;width:65px;height:25px;line-height:25px;font-size:12px;color:#333;font-weight:normal;">2.62</div>
<div class="t" style="left:760px;top:462px;width:64px;height:25px;line-height:25px;font-size:12px;color:#333;font-weight:normal;">3.29</div>
<div class="t" style="left:825px;top:462px;width:65px;height:25px;line-height:25px;font-size:12px;color:#333;font-weight:normal;">2.66</div>
<div class="t" style="left:891px;top:462px;width:38px;height:25px;line-height:25px;font-size:12px;color:#ff0000;font-weight:normal;">胜</div>
<div class="t" style="left:930px;top:462px;width:38px;height:25px;line-height:25px;font-size:12px;color:#ff0000;font-weight:normal;">赢</div>
<div class="t" style="left:969px;top:462px;width:57px;height:25px;line-height:25px;font-size:12px;color:#ff0000;font-weight:normal;">大</div>
<div style="left:0px;top:486px;width:80px;height:25px;background:#0088ff;"></div>
<div style="left:81px;top:486px;width:430px;height:25px;background:#efefef;"></div>
<div style="left:512px;top:486px;width:181px;height:25px;background:#fdf8f4;"></div>
<div style="left:694px;top:486px;width:196px;height:25px;background:#eef5fb;"></div>
<div style="left:891px;top:486px;width:135px;height:25px;background:#efefef;"></div>
<div style="left:0px;top:511px;width:1026px;height:1px;background:#bdbdbd;"></div>
<div class="t" style="left:-1px;top:488px;width:81px;height:25px;line-height:25px;font-size:12px;color:#fff;font-weight:normal;-webkit-text-stroke:0.3px #fff">意甲</div>
<div class="t" style="left:81px;top:488px;width:75px;height:25px;line-height:25px;font-size:12px;color:#333;font-weight:normal;">26-03-17</div>
<div class="t" style="left:157px;top:488px;width:128px;height:25px;line-height:25px;font-size:12px;color:#000;font-weight:normal;">克雷莫纳</div>
<div class="t" style="left:286px;top:488px;width:91px;height:25px;line-height:25px;font-size:12px;color:#333;font-weight:normal;"><span style="color:#ff0000">1-4</span>(0-2)</div>
<div class="t" style="left:378px;top:488px;width:38px;height:25px;line-height:25px;font-size:12px;color:#333;font-weight:normal;">4-6</div>
<div class="t" style="left:417px;top:488px;width:94px;height:25px;line-height:25px;font-size:12px;color:#008000;font-weight:normal;">佛罗伦萨</div>
<div class="t" style="left:512px;top:488px;width:48px;height:25px;line-height:25px;font-size:12px;color:#333;font-weight:normal;">0.99</div>
<div class="t" style="left:561px;top:488px;width:84px;height:25px;line-height:25px;font-size:12px;color:#333;font-weight:normal;">受半球</div>
<div class="t" style="left:646px;top:488px;width:47px;height:25px;line-height:25px;font-size:12px;color:#333;font-weight:normal;">0.89</div>
<div class="t" style="left:694px;top:488px;width:65px;height:25px;line-height:25px;font-size:12px;color:#333;font-weight:normal;">4.22</div>
<div class="t" style="left:760px;top:488px;width:64px;height:25px;line-height:25px;font-size:12px;color:#333;font-weight:normal;">3.43</div>
<div class="t" style="left:825px;top:488px;width:65px;height:25px;line-height:25px;font-size:12px;color:#333;font-weight:normal;">1.91</div>
<div class="t" style="left:891px;top:488px;width:38px;height:25px;line-height:25px;font-size:12px;color:#ff0000;font-weight:normal;">胜</div>
<div class="t" style="left:930px;top:488px;width:38px;height:25px;line-height:25px;font-size:12px;color:#ff0000;font-weight:normal;">赢</div>
<div class="t" style="left:969px;top:488px;width:57px;height:25px;line-height:25px;font-size:12px;color:#ff0000;font-weight:normal;">大</div>
<div style="left:0px;top:512px;width:80px;height:25px;background:#cc77dd;"></div>
<div style="left:81px;top:512px;width:430px;height:25px;background:#fff;"></div>
<div style="left:512px;top:512px;width:181px;height:25px;background:#fdf8f4;"></div>
<div style="left:694px;top:512px;width:196px;height:25px;background:#eef5fb;"></div>
<div style="left:891px;top:512px;width:135px;height:25px;background:#fff;"></div>
<div style="left:0px;top:537px;width:1026px;height:1px;background:#bdbdbd;"></div>
<div class="t" style="left:-1px;top:514px;width:81px;height:25px;line-height:25px;font-size:12px;color:#fff;font-weight:normal;-webkit-text-stroke:0.3px #fff">欧会杯</div>
<div class="t" style="left:81px;top:514px;width:75px;height:25px;line-height:25px;font-size:12px;color:#333;font-weight:normal;">26-03-13</div>
<div class="t" style="left:157px;top:514px;width:128px;height:25px;line-height:25px;font-size:12px;color:#008000;font-weight:normal;">佛罗伦萨</div>
<div class="t" style="left:286px;top:514px;width:91px;height:25px;line-height:25px;font-size:12px;color:#333;font-weight:normal;"><span style="color:#ff0000">2-1</span>(0-0)</div>
<div class="t" style="left:378px;top:514px;width:38px;height:25px;line-height:25px;font-size:12px;color:#333;font-weight:normal;">8-3</div>
<div class="t" style="left:417px;top:514px;width:94px;height:25px;line-height:25px;font-size:12px;color:#000;font-weight:normal;">琴斯托霍瓦</div>
<div class="t" style="left:512px;top:514px;width:48px;height:25px;line-height:25px;font-size:12px;color:#333;font-weight:normal;">0.90</div>
<div class="t" style="left:561px;top:514px;width:84px;height:25px;line-height:25px;font-size:12px;color:#333;font-weight:normal;">半球</div>
<div class="t" style="left:646px;top:514px;width:47px;height:25px;line-height:25px;font-size:12px;color:#333;font-weight:normal;">0.98</div>
<div class="t" style="left:694px;top:514px;width:65px;height:25px;line-height:25px;font-size:12px;color:#333;font-weight:normal;">1.84</div>
<div class="t" style="left:760px;top:514px;width:64px;height:25px;line-height:25px;font-size:12px;color:#333;font-weight:normal;">3.51</div>
<div class="t" style="left:825px;top:514px;width:65px;height:25px;line-height:25px;font-size:12px;color:#333;font-weight:normal;">4.28</div>
<div class="t" style="left:891px;top:514px;width:38px;height:25px;line-height:25px;font-size:12px;color:#ff0000;font-weight:normal;">胜</div>
<div class="t" style="left:930px;top:514px;width:38px;height:25px;line-height:25px;font-size:12px;color:#ff0000;font-weight:normal;">赢</div>
<div class="t" style="left:969px;top:514px;width:57px;height:25px;line-height:25px;font-size:12px;color:#ff0000;font-weight:normal;">大</div>
<div style="left:80px;top:407px;width:1px;height:130px;background:#bdbdbd;"></div>
<div style="left:156px;top:407px;width:1px;height:130px;background:#bdbdbd;"></div>
<div style="left:285px;top:407px;width:1px;height:130px;background:#bdbdbd;"></div>
<div style="left:377px;top:407px;width:1px;height:130px;background:#bdbdbd;"></div>
<div style="left:416px;top:407px;width:1px;height:130px;background:#bdbdbd;"></div>
<div style="left:511px;top:407px;width:1px;height:130px;background:#bdbdbd;"></div>
<div style="left:693px;top:407px;width:1px;height:130px;background:#bdbdbd;"></div>
<div style="left:890px;top:407px;width:1px;height:130px;background:#bdbdbd;"></div>
<div style="left:560px;top:407px;width:1px;height:130px;background:#bdbdbd;"></div>
<div style="left:645px;top:407px;width:1px;height:130px;background:#bdbdbd;"></div>
<div style="left:759px;top:407px;width:1px;height:130px;background:#bdbdbd;"></div>
<div style="left:824px;top:407px;width:1px;height:130px;background:#bdbdbd;"></div>
<div style="left:929px;top:407px;width:1px;height:130px;background:#bdbdbd;"></div>
<div style="left:968px;top:407px;width:1px;height:130px;background:#bdbdbd;"></div>
<div style="left:0px;top:538px;width:1026px;height:25px;background:#fff;"></div>
<div class="t" style="left:0px;top:540px;width:1026px;height:25px;line-height:25px;font-size:12px;color:#333;font-weight:normal;letter-spacing:0.2px">近<span style="color:#ff0000">5</span>场,胜4平1负0, 胜率:<span style="color:#ff0000">80%</span> 让胜率:<span style="color:#ff0000">100%</span> 大率:<span style="color:#ff0000">60%</span> 单率:<span style="color:#ff0000">80%</span></div>
<div style="left:0px;top:563px;width:1026px;height:1px;background:#bdbdbd;"></div>
<div style="left:0px;top:564px;width:1026px;height:4px;background:#fff;"></div>
<div style="left:0px;top:568px;width:1026px;height:29px;background:#51409b;"></div>
<div class="lt" style="left:444px;top:569px;height:29px;line-height:29px;font-size:15px;color:#fff;font-weight:bold;-webkit-text-stroke:0.3px #fff">数据对比</div>
<div class="lt" style="left:514px;top:569px;height:29px;line-height:29px;font-size:12px;color:#fff;font-weight:normal;">近</div>
<div class="sel" style="left:530px;top:576px;width:37px;height:18px;line-height:16px;font-size:13.33px"><span style="position:absolute;left:4px;top:0">10</span><svg width="10" height="7" viewBox="0 0 10 7" style="position:absolute;right:3px;top:5px"><path d="M1 1.2 L5 5.2 L9 1.2" fill="none" stroke="#000" stroke-width="2"/></svg></div>
<div class="lt" style="left:571px;top:569px;height:29px;line-height:29px;font-size:12px;color:#fff;font-weight:normal;">场</div>
<div style="left:0px;top:597px;width:1026px;height:21px;background:#fcf1de;"></div>
<div style="left:0px;top:618px;width:1026px;height:1px;background:#bdbdbd;"></div>
<div style="left:0px;top:619px;width:1026px;height:20px;background:#fff;"></div>
<div style="left:0px;top:639px;width:1026px;height:1px;background:#bdbdbd;"></div>
<div style="left:0px;top:640px;width:1026px;height:20px;background:#efefef;"></div>
<div style="left:0px;top:660px;width:1026px;height:3px;background:#51409b;"></div>
<div style="left:0px;top:597px;width:1026px;height:1px;background:#e2dccc;"></div>
<div style="left:76px;top:598px;width:1px;height:62px;background:#bdbdbd;"></div>
<div style="left:134px;top:598px;width:1px;height:62px;background:#bdbdbd;"></div>
<div style="left:192px;top:598px;width:1px;height:62px;background:#bdbdbd;"></div>
<div style="left:250px;top:598px;width:1px;height:62px;background:#bdbdbd;"></div>
<div style="left:327px;top:598px;width:1px;height:62px;background:#bdbdbd;"></div>
<div style="left:367px;top:598px;width:1px;height:62px;background:#bdbdbd;"></div>
<div style="left:407px;top:598px;width:1px;height:62px;background:#bdbdbd;"></div>
<div style="left:448px;top:598px;width:1px;height:62px;background:#bdbdbd;"></div>
<div style="left:525px;top:598px;width:1px;height:62px;background:#bdbdbd;"></div>
<div style="left:602px;top:598px;width:1px;height:62px;background:#bdbdbd;"></div>
<div style="left:698px;top:598px;width:1px;height:62px;background:#bdbdbd;"></div>
<div style="left:794px;top:598px;width:1px;height:62px;background:#bdbdbd;"></div>
<div style="left:871px;top:598px;width:1px;height:62px;background:#bdbdbd;"></div>
<div style="left:948px;top:598px;width:1px;height:62px;background:#bdbdbd;"></div>
<div class="t" style="left:-1px;top:599px;width:77px;height:21px;line-height:21px;font-size:12px;color:#333;font-weight:normal;">球队</div>
<div class="t" style="left:-1px;top:620px;width:77px;height:20px;line-height:20px;font-size:12px;color:#000;font-weight:normal;">水晶宫</div>
<div class="t" style="left:-1px;top:641px;width:77px;height:20px;line-height:20px;font-size:12px;color:#1e50a0;font-weight:normal;">佛罗伦萨</div>
<div class="t" style="left:77px;top:599px;width:57px;height:21px;line-height:21px;font-size:12px;color:#333;font-weight:normal;">总入球</div>
<div class="t" style="left:77px;top:620px;width:57px;height:20px;line-height:20px;font-size:12px;color:#000;font-weight:normal;">12</div>
<div class="t" style="left:77px;top:641px;width:57px;height:20px;line-height:20px;font-size:12px;color:#1e50a0;font-weight:normal;">14</div>
<div class="t" style="left:135px;top:599px;width:57px;height:21px;line-height:21px;font-size:12px;color:#333;font-weight:normal;">总失球</div>
<div class="t" style="left:135px;top:620px;width:57px;height:20px;line-height:20px;font-size:12px;color:#000;font-weight:normal;">8</div>
<div class="t" style="left:135px;top:641px;width:57px;height:20px;line-height:20px;font-size:12px;color:#1e50a0;font-weight:normal;">10</div>
<div class="t" style="left:193px;top:599px;width:57px;height:21px;line-height:21px;font-size:12px;color:#333;font-weight:normal;">净胜球</div>
<div class="t" style="left:193px;top:620px;width:57px;height:20px;line-height:20px;font-size:12px;color:#000;font-weight:normal;">4</div>
<div class="t" style="left:193px;top:641px;width:57px;height:20px;line-height:20px;font-size:12px;color:#1e50a0;font-weight:normal;">4</div>
<div class="t" style="left:251px;top:599px;width:76px;height:21px;line-height:21px;font-size:12px;color:#333;font-weight:normal;">场均入球</div>
<div class="t" style="left:251px;top:620px;width:76px;height:20px;line-height:20px;font-size:12px;color:#000;font-weight:normal;">1.2</div>
<div class="t" style="left:251px;top:641px;width:76px;height:20px;line-height:20px;font-size:12px;color:#1e50a0;font-weight:normal;">1.4</div>
<div class="t" style="left:328px;top:599px;width:39px;height:21px;line-height:21px;font-size:12px;color:#333;font-weight:normal;">胜率</div>
<div class="t" style="left:328px;top:620px;width:39px;height:20px;line-height:20px;font-size:12px;color:#000;font-weight:normal;">40%</div>
<div class="t" style="left:328px;top:641px;width:39px;height:20px;line-height:20px;font-size:12px;color:#1e50a0;font-weight:normal;">60%</div>
<div class="t" style="left:368px;top:599px;width:39px;height:21px;line-height:21px;font-size:12px;color:#333;font-weight:normal;">平率</div>
<div class="t" style="left:368px;top:620px;width:39px;height:20px;line-height:20px;font-size:12px;color:#000;font-weight:normal;">40%</div>
<div class="t" style="left:368px;top:641px;width:39px;height:20px;line-height:20px;font-size:12px;color:#1e50a0;font-weight:normal;">20%</div>
<div class="t" style="left:408px;top:599px;width:40px;height:21px;line-height:21px;font-size:12px;color:#333;font-weight:normal;">负率</div>
<div class="t" style="left:408px;top:620px;width:40px;height:20px;line-height:20px;font-size:12px;color:#000;font-weight:normal;">20%</div>
<div class="t" style="left:408px;top:641px;width:40px;height:20px;line-height:20px;font-size:12px;color:#1e50a0;font-weight:normal;">20%</div>
<div class="t" style="left:449px;top:599px;width:76px;height:21px;line-height:21px;font-size:12px;color:#333;font-weight:normal;">主客入球</div>
<div class="t" style="left:449px;top:620px;width:76px;height:20px;line-height:20px;font-size:12px;color:#000;font-weight:normal;">5</div>
<div class="t" style="left:449px;top:641px;width:76px;height:20px;line-height:20px;font-size:12px;color:#1e50a0;font-weight:normal;">10</div>
<div class="t" style="left:526px;top:599px;width:76px;height:21px;line-height:21px;font-size:12px;color:#333;font-weight:normal;">主客失球</div>
<div class="t" style="left:526px;top:620px;width:76px;height:20px;line-height:20px;font-size:12px;color:#000;font-weight:normal;">3</div>
<div class="t" style="left:526px;top:641px;width:76px;height:20px;line-height:20px;font-size:12px;color:#1e50a0;font-weight:normal;">5</div>
<div class="t" style="left:603px;top:599px;width:95px;height:21px;line-height:21px;font-size:12px;color:#333;font-weight:normal;">主客净胜球</div>
<div class="t" style="left:603px;top:620px;width:95px;height:20px;line-height:20px;font-size:12px;color:#000;font-weight:normal;">2</div>
<div class="t" style="left:603px;top:641px;width:95px;height:20px;line-height:20px;font-size:12px;color:#1e50a0;font-weight:normal;">5</div>
<div class="t" style="left:699px;top:599px;width:95px;height:21px;line-height:21px;font-size:12px;color:#333;font-weight:normal;">主客均入球</div>
<div class="t" style="left:699px;top:620px;width:95px;height:20px;line-height:20px;font-size:12px;color:#000;font-weight:normal;">1</div>
<div class="t" style="left:699px;top:641px;width:95px;height:20px;line-height:20px;font-size:12px;color:#1e50a0;font-weight:normal;">2</div>
<div class="t" style="left:795px;top:599px;width:76px;height:21px;line-height:21px;font-size:12px;color:#333;font-weight:normal;">主客胜率</div>
<div class="t" style="left:795px;top:620px;width:76px;height:20px;line-height:20px;font-size:12px;color:#000;font-weight:normal;">40%</div>
<div class="t" style="left:795px;top:641px;width:76px;height:20px;line-height:20px;font-size:12px;color:#1e50a0;font-weight:normal;">80%</div>
<div class="t" style="left:872px;top:599px;width:76px;height:21px;line-height:21px;font-size:12px;color:#333;font-weight:normal;">主客平率</div>
<div class="t" style="left:872px;top:620px;width:76px;height:20px;line-height:20px;font-size:12px;color:#000;font-weight:normal;">40%</div>
<div class="t" style="left:872px;top:641px;width:76px;height:20px;line-height:20px;font-size:12px;color:#1e50a0;font-weight:normal;">0%</div>
<div class="t" style="left:949px;top:599px;width:77px;height:21px;line-height:21px;font-size:12px;color:#333;font-weight:normal;">主客负率</div>
<div class="t" style="left:949px;top:620px;width:77px;height:20px;line-height:20px;font-size:12px;color:#000;font-weight:normal;">20%</div>
<div class="t" style="left:949px;top:641px;width:77px;height:20px;line-height:20px;font-size:12px;color:#1e50a0;font-weight:normal;">20%</div>
</body></html>
